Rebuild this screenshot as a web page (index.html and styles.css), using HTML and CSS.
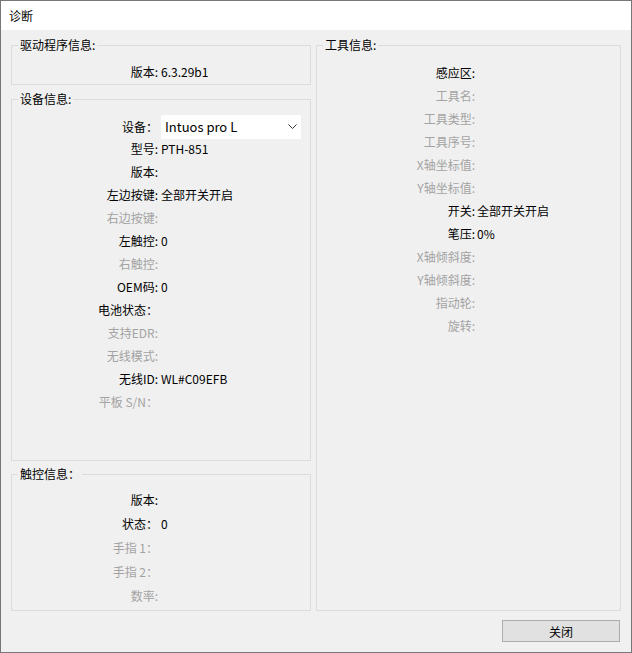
FILE: index.html
```html
<!DOCTYPE html>
<html lang="zh-CN">

<head>
    <meta charset="UTF-8">
    <meta name="viewport" content="width=device-width, initial-scale=1.0">
    <title>诊断</title>
    <link rel="stylesheet" href="styles.css">
</head>

<body>
    <div class="window">
        <div class="titlebar">诊断</div>

        <div class="content">
            <div class="col">
                <div class="group driver">
                    <span class="group-title">驱动程序信息:</span>
                    <div class="row"><span class="label">版本:</span><span>6.3.29b1</span></div>
                </div>

                <div class="group device">
                    <span class="group-title">设备信息:</span>
                    <div class="row row-select">
                        <span class="label">设备：</span>
                        <div class="select">
                            <span>Intuos pro L</span>
                            <svg width="9" height="6" viewBox="0 0 9 6"><path d="M0.5 0.5 L4.5 4.5 L8.5 0.5" fill="none" stroke="#333" stroke-width="1"/></svg>
                        </div>
                    </div>
                    <div class="row"><span class="label">型号:</span><span>PTH-851</span></div>
                    <div class="row"><span class="label">版本:</span><span></span></div>
                    <div class="row"><span class="label">左边按键:</span><span>全部开关开启</span></div>
                    <div class="row off"><span class="label">右边按键:</span><span></span></div>
                    <div class="row"><span class="label">左触控:</span><span>0</span></div>
                    <div class="row off"><span class="label">右触控:</span><span></span></div>
                    <div class="row"><span class="label">OEM码:</span><span>0</span></div>
                    <div class="row"><span class="label">电池状态：</span><span></span></div>
                    <div class="row off"><span class="label">支持EDR:</span><span></span></div>
                    <div class="row off"><span class="label">无线模式:</span><span></span></div>
                    <div class="row"><span class="label">无线ID:</span><span>WL#C09EFB</span></div>
                    <div class="row off"><span class="label">平板 S/N：</span><span></span></div>
                </div>

                <div class="group touch">
                    <span class="group-title">触控信息：</span>
                    <div class="row"><span class="label">版本:</span><span></span></div>
                    <div class="row"><span class="label">状态：</span><span>0</span></div>
                    <div class="row off"><span class="label">手指 1：</span><span></span></div>
                    <div class="row off"><span class="label">手指 2：</span><span></span></div>
                    <div class="row off"><span class="label">数率:</span><span></span></div>
                </div>
            </div>

            <div class="group tool">
                <span class="group-title">工具信息:</span>
                <div class="row"><span class="label">感应区:</span><span></span></div>
                <div class="row off"><span class="label">工具名:</span><span></span></div>
                <div class="row off"><span class="label">工具类型:</span><span></span></div>
                <div class="row off"><span class="label">工具序号:</span><span></span></div>
                <div class="row off"><span class="label">X轴坐标值:</span><span></span></div>
                <div class="row off"><span class="label">Y轴坐标值:</span><span></span></div>
                <div class="row"><span class="label">开关:</span><span>全部开关开启</span></div>
                <div class="row"><span class="label">笔压:</span><span>0%</span></div>
                <div class="row off"><span class="label">X轴倾斜度:</span><span></span></div>
                <div class="row off"><span class="label">Y轴倾斜度:</span><span></span></div>
                <div class="row off"><span class="label">指动轮:</span><span></span></div>
                <div class="row off"><span class="label">旋转:</span><span></span></div>
            </div>
        </div>

        <div class="footer">
            <button class="btn">关闭</button>
        </div>
    </div>
</body>

</html>
```

FILE: styles.css
```css
* {
    margin: 0;
    padding: 0;
    box-sizing: border-box;
}

body {
    font-family: "Noto Sans CJK SC", "Noto Sans", sans-serif;
    font-size: 12px;
    color: #000;
    background: #fff;
}

.window {
    width: 632px;
    height: 653px;
    border: 1px solid #777;
    background: #f0f0f0;
    display: flex;
    flex-direction: column;
}

.titlebar {
    height: 29px;
    line-height: 29px;
    background: #fff;
    padding-left: 8px;
}

.content {
    padding: 15px 10px 0 10px;
    display: grid;
    grid-template-columns: 300px 305px;
    column-gap: 5px;
}

.group {
    position: relative;
    border: 1px solid #dcdcdc;
}

.group-title {
    position: absolute;
    top: -9px;
    left: 6px;
    padding: 0 2px;
    line-height: 16px;
    background: #f0f0f0;
}

.driver {
    height: 40px;
    padding-top: 15px;
}

.device {
    height: 362px;
    margin-top: 14px;
    padding-top: 15px;
}

.touch {
    height: 137px;
    margin-top: 13px;
    padding-top: 14px;
}

.touch .row {
    height: 24px;
    line-height: 22px;
}

.tool {
    height: 566px;
    padding-top: 16px;
}

.row {
    display: grid;
    grid-template-columns: 146px 1fr;
    column-gap: 3px;
    height: 23px;
    line-height: 21px;
    white-space: nowrap;
}

.tool .row {
    grid-template-columns: 158px 1fr;
    column-gap: 2px;
}

.label {
    text-align: right;
}

.off {
    color: #a3a3a3;
}

.row-select {
    height: 24px;
    line-height: 24px;
    margin-bottom: -1px;
}

.select {
    width: 140px;
    height: 24px;
    background: #fff;
    display: flex;
    justify-content: space-between;
    align-items: center;
    padding: 0 4px 0 4px;
    font-size: 13px;
}

.footer {
    display: flex;
    justify-content: flex-end;
    padding: 9px 11px 0 0;
}

.btn {
    width: 118px;
    height: 22px;
    border: 1px solid #adadad;
    background: #e1e1e1;
    font-family: "Noto Sans CJK SC", "Noto Sans", sans-serif;
    font-size: 12px;
    color: #000;
}
```
